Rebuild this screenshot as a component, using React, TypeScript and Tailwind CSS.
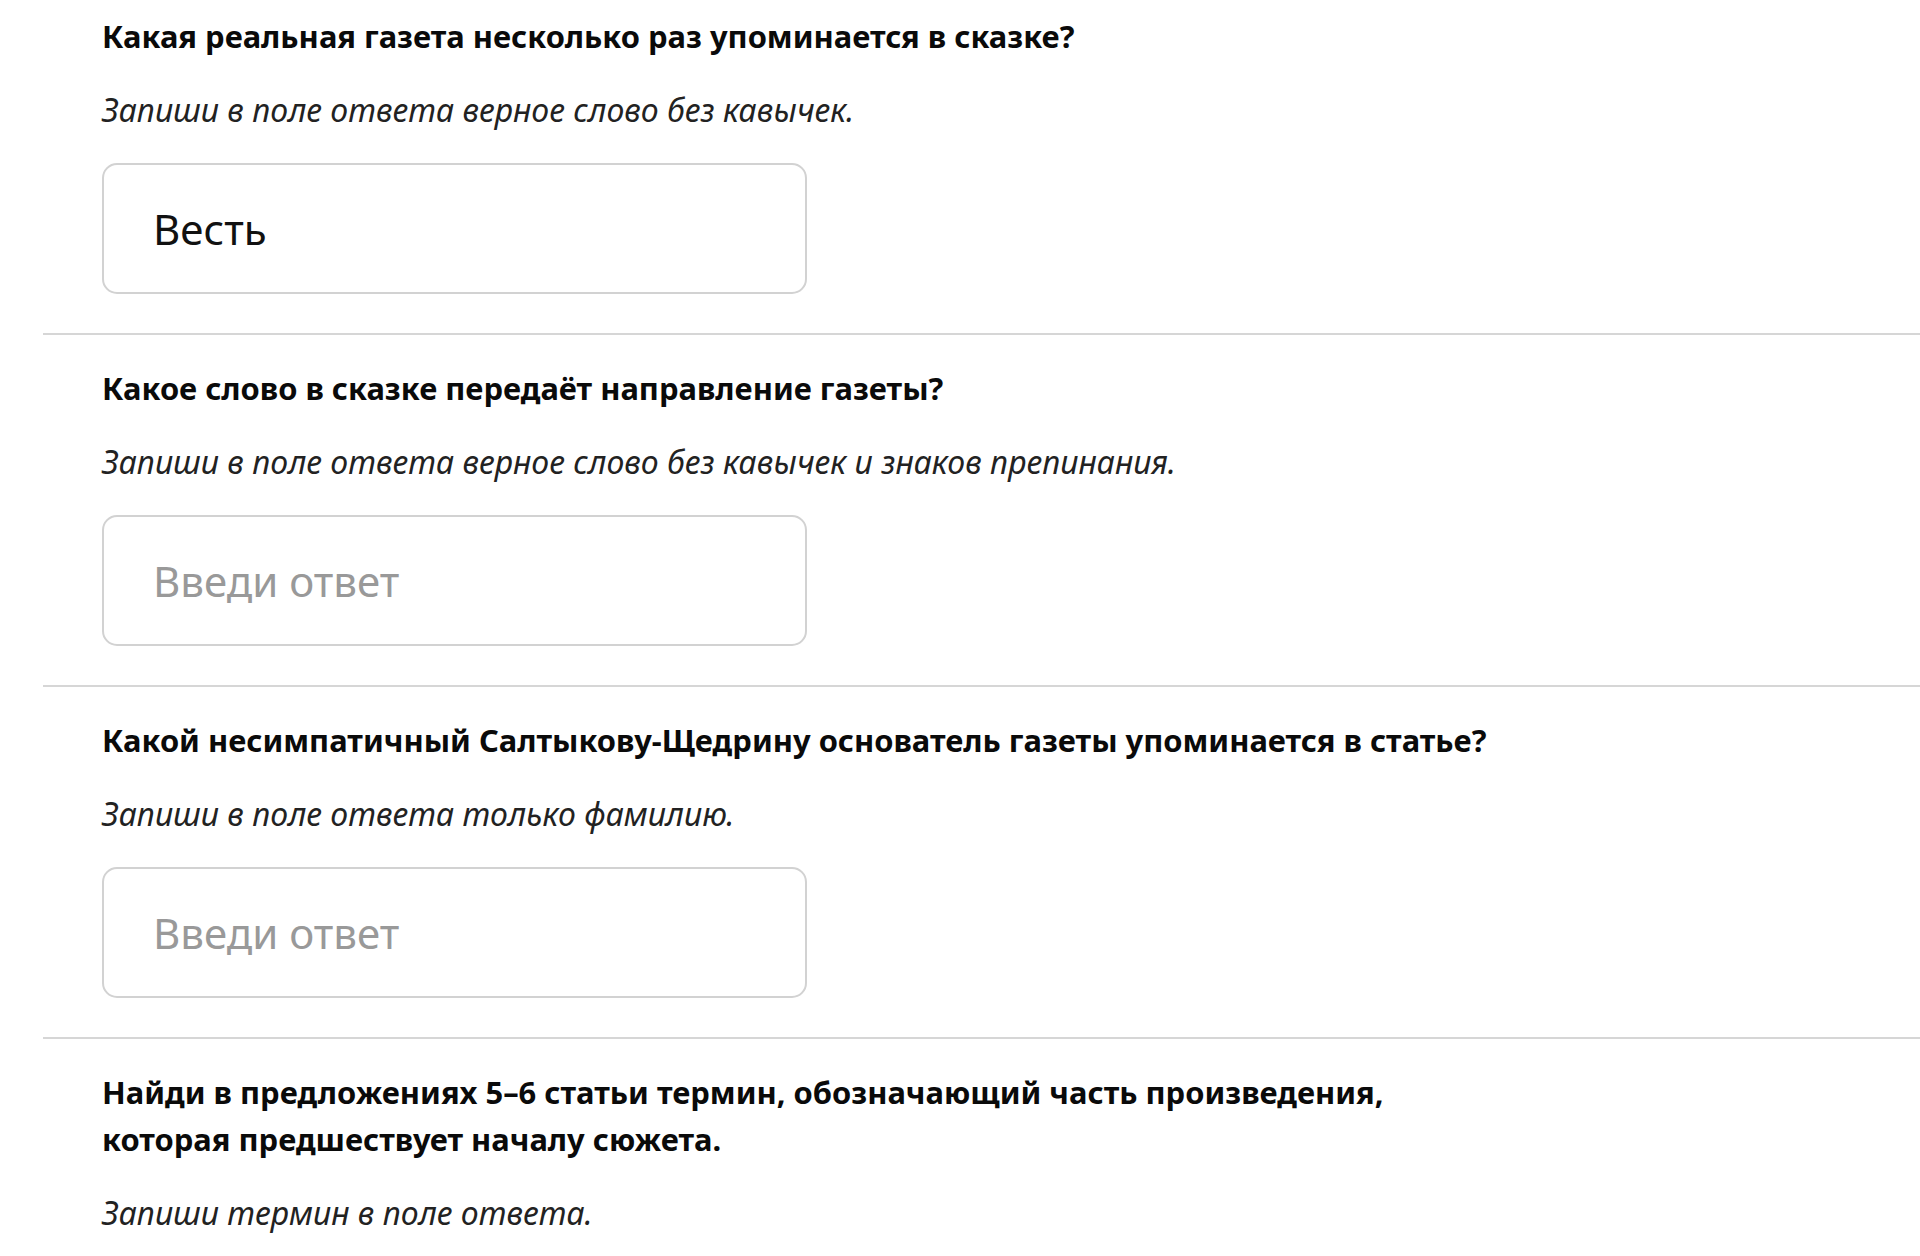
import React from 'react';

type Question = {
  title: string[];
  hint: string;
  value?: string;
  input?: boolean;
};

const questions: Question[] = [
  {
    title: ['Какая реальная газета несколько раз упоминается в сказке?'],
    hint: 'Запиши в поле ответа верное слово без кавычек.',
    value: 'Весть',
    input: true,
  },
  {
    title: ['Какое слово в сказке передаёт направление газеты?'],
    hint: 'Запиши в поле ответа верное слово без кавычек и знаков препинания.',
    input: true,
  },
  {
    title: ['Какой несимпатичный Салтыкову-Щедрину основатель газеты упоминается в статье?'],
    hint: 'Запиши в поле ответа только фамилию.',
    input: true,
  },
  {
    title: [
      'Найди в предложениях 5–6 статьи термин, обозначающий часть произведения,',
      'которая предшествует началу сюжета.',
    ],
    hint: 'Запиши термин в поле ответа.',
    input: false,
  },
];

const font = { fontFamily: '"Noto Sans", "Open Sans", Arial, sans-serif' };

const QuestionBlock: React.FC<{ q: Question; first: boolean }> = ({ q, first }) => (
  <section className={first ? 'pt-[13px] pb-[39px]' : 'border-t-2 border-[#d6d6d6] pt-[30px] pb-[39px]'}>
    <div className="pl-[59px]">
      <h2 className="text-[30.9px] leading-[47px] font-bold text-[#0a0a0a]">
        {q.title.map((line, i) => (
          <React.Fragment key={i}>
            {line}
            {i < q.title.length - 1 && <br />}
          </React.Fragment>
        ))}
      </h2>
      <p className="mt-[30px] text-[32px] leading-[40px] italic text-[#222]">{q.hint}</p>
      {q.input && (
        <input
          type="text"
          readOnly
          defaultValue={q.value}
          placeholder="Введи ответ"
          className="mt-[33px] block h-[131px] w-[705px] rounded-[15px] border-2 border-[#d2d2d2] bg-white pl-[49px] text-[42px] text-[#111] outline-none placeholder:text-[#999]"
          style={font}
        />
      )}
    </div>
  </section>
);

const App: React.FC = () => (
  <div className="min-h-screen bg-white" style={font}>
    <div className="ml-[43px]">
      {questions.map((q, i) => (
        <QuestionBlock key={i} q={q} first={i === 0} />
      ))}
    </div>
  </div>
);

export default App;
